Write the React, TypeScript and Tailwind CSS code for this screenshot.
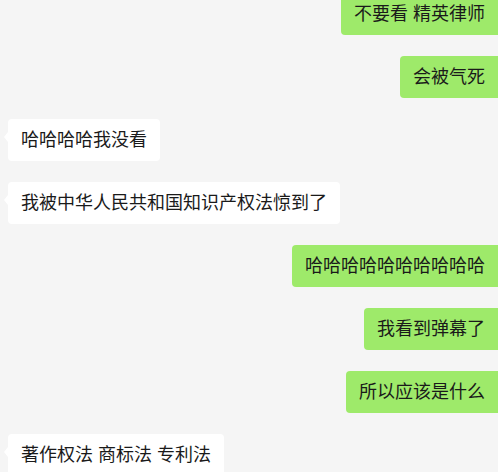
import React from "react";

type Msg = { text: string; me: boolean };

const msgs: Msg[] = [
  { text: "不要看 精英律师", me: true },
  { text: "会被气死", me: true },
  { text: "哈哈哈哈我没看", me: false },
  { text: "我被中华人民共和国知识产权法惊到了", me: false },
  { text: "哈哈哈哈哈哈哈哈哈哈", me: true },
  { text: "我看到弹幕了", me: true },
  { text: "所以应该是什么", me: true },
  { text: "著作权法 商标法 专利法", me: false },
];

export default function App() {
  return (
    <div
      className="w-[498px] h-[472px] overflow-hidden bg-[#f5f5f5] flex flex-col"
      style={{ fontFamily: '"Liberation Sans", "Noto Sans CJK SC", sans-serif' }}
    >
      <div className="flex flex-col gap-[21px] -mt-[7px]">
        {msgs.map((m, i) =>
          m.me ? (
            <div key={i} className="flex justify-end">
              <div className="h-[42px] shrink-0 whitespace-nowrap rounded-l-[4px] bg-[#9eea6a] px-[13px] text-[18px] leading-[42px] text-[#1a1a1a]">
                {m.text}
              </div>
            </div>
          ) : (
            <div key={i} className="flex justify-start pl-[8px]">
              <div className="relative h-[42px] shrink-0 whitespace-nowrap rounded-[4px] bg-white px-[13px] text-[18px] leading-[42px] text-[#1a1a1a]">
                <span className="absolute left-[-4px] top-[13px] h-0 w-0 border-y-[5px] border-r-[4px] border-y-transparent border-r-white" />
                {m.text}
              </div>
            </div>
          )
        )}
      </div>
    </div>
  );
}
